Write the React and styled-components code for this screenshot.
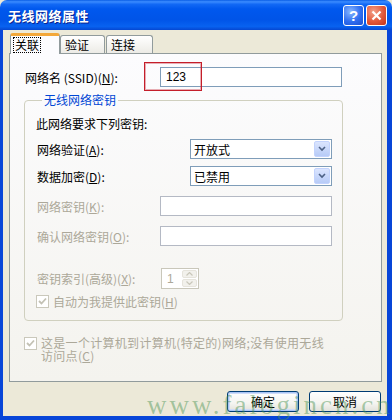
import React from "react";
import styled, { createGlobalStyle } from "styled-components";

const GlobalStyle = createGlobalStyle`
  html, body {
    margin: 0;
    padding: 0;
    background: #ece9d8;
  }
  * {
    box-sizing: border-box;
  }
`;

const Window = styled.div`
  position: relative;
  width: 392px;
  height: 420px;
  display: flex;
  flex-direction: column;
  overflow: hidden;
  font-family: "Noto Sans CJK SC", "Liberation Sans", sans-serif;
  font-size: 12px;
  color: #000;
`;

const TitleBar = styled.div`
  height: 30px;
  flex: none;
  display: flex;
  align-items: center;
  padding: 0 5px 0 8px;
  border-radius: 7px 7px 0 0;
  background: linear-gradient(
    to bottom,
    #0a5ee6 0%,
    #3b8cff 6%,
    #1269f5 14%,
    #0058ee 30%,
    #0054e8 65%,
    #0862f0 88%,
    #0547d2 100%
  );
`;

const Title = styled.div`
  flex: 1;
  color: #fff;
  font-weight: bold;
  font-size: 13px;
  letter-spacing: 0.5px;
  text-shadow: 1px 1px 0 #0b2490;
`;

const CaptionButton = styled.div`
  width: 21px;
  height: 21px;
  margin-left: 2px;
  border: 1px solid #fff;
  border-radius: 3px;
  display: flex;
  align-items: center;
  justify-content: center;
  color: #fff;
  font-family: "Liberation Sans", sans-serif;
  font-weight: bold;
  font-size: 15px;
  background: ${(p) =>
    p.$close
      ? "radial-gradient(circle at 35% 30%, #f3a08a 0%, #e2583a 55%, #c2351b 100%)"
      : "radial-gradient(circle at 35% 30%, #8ab8ff 0%, #2f6ef0 55%, #1c4fd0 100%)"};
`;

const Frame = styled.div`
  flex: 1;
  display: flex;
  flex-direction: column;
  padding: 3px 5px 0 6px;
  border-left: 3px solid #0846d8;
  border-right: 5px solid #0846d8;
  border-bottom: 4px solid #0846d8;
  background: #ece9d8;
`;

const TabRow = styled.div`
  display: flex;
  align-items: flex-end;
  height: 21px;
  margin-bottom: -1px;
  padding-left: 1px;
  position: relative;
  z-index: 1;
`;

const Tab = styled.div`
  width: ${(p) => p.$w}px;
  height: ${(p) => (p.$active ? 21 : 18)}px;
  margin-bottom: ${(p) => (p.$active ? 0 : 1)}px;
  margin-right: ${(p) => p.$gap || 0}px;
  display: flex;
  align-items: center;
  padding-left: ${(p) => (p.$active ? 3 : 4)}px;
  border: 1px solid #919b9c;
  border-bottom: none;
  border-radius: 3px 3px 0 0;
  border-top: ${(p) => (p.$active ? "3px solid #f3a83a" : "1px solid #919b9c")};
  background: ${(p) =>
    p.$active ? "#fcfcfe" : "linear-gradient(to bottom, #ffffff, #ecebe6)"};
`;

const FocusText = styled.span`
  outline: 1px dotted #000;
  padding: 0 1px;
  line-height: 14px;
`;

const Panel = styled.div`
  position: relative;
  height: 329px;
  border: 1px solid #919b9c;
  background: linear-gradient(to bottom, #fcfcfe, #f4f3ee);
  padding: 13px 0 0 14px;
`;

const Row = styled.div`
  position: relative;
  display: flex;
  align-items: center;
  height: ${(p) => p.$h || 20}px;
  margin-top: ${(p) => p.$mt || 0}px;
  padding-left: ${(p) => p.$pl || 0}px;
  color: ${(p) => (p.$disabled ? "#aca899" : "#000")};
`;

const Label = styled.div`
  width: ${(p) => p.$w}px;
  flex: none;
  white-space: nowrap;
`;

const TextBox = styled.div`
  width: ${(p) => p.$w}px;
  height: 20px;
  border: 1px solid ${(p) => (p.$disabled ? "#b4b9c4" : "#7f9db9")};
  background: #fff;
  display: flex;
  align-items: center;
  padding-left: 5px;
  font-family: "Liberation Sans", sans-serif;
  font-size: 12px;
`;

const Highlight = styled.div`
  position: absolute;
  left: 120px;
  top: -5px;
  width: 58px;
  height: 29px;
  border: 1px solid #c41e2a;
  box-shadow: inset 0 0 0 1px rgba(196, 30, 42, 0.35);
  pointer-events: none;
`;

const Group = styled.fieldset`
  width: 319px;
  margin: 6px 0 0 0;
  padding: 0 10px 12px 11px;
  border: 1px solid #d0d0bf;
  border-radius: 4px;
`;

const Legend = styled.legend`
  margin-left: 6px;
  padding: 0 2px;
  color: #0046d5;
  line-height: 14px;
`;

const Spread = styled.div`
  display: flex;
  justify-content: space-between;
  align-items: center;
  width: 100%;
`;

const SelectBox = styled.div`
  width: 142px;
  height: 20px;
  border: 1px solid #7f9db9;
  background: #fff;
  display: flex;
  align-items: center;
  justify-content: space-between;
  padding: 0 1px 0 3px;
  color: #000;
`;

const DropButton = styled.div`
  width: 16px;
  height: 16px;
  border: 1px solid #c3d3fd;
  border-radius: 2px;
  background: linear-gradient(to bottom, #dbe5fe, #b7cbf7);
  display: flex;
  align-items: center;
  justify-content: center;
`;

const Spinner = styled.div`
  width: 38px;
  height: 21px;
  border: 1px solid #c9c7ba;
  background: #fff;
  display: flex;
  align-items: center;
  justify-content: space-between;
  padding: 1px 1px 1px 5px;
  color: #aca899;
  font-family: "Liberation Sans", sans-serif;
`;

const SpinButtons = styled.div`
  width: 15px;
  height: 100%;
  display: flex;
  flex-direction: column;
  gap: 1px;
`;

const SpinHalf = styled.div`
  flex: 1;
  border: 1px solid #e6e4dc;
  border-radius: 2px;
  background: #f2f1ec;
  display: flex;
  align-items: center;
  justify-content: center;
`;

const CheckRow = styled.div`
  display: flex;
  align-items: ${(p) => (p.$top ? "flex-start" : "center")};
  gap: 4px;
  margin-top: ${(p) => p.$mt || 0}px;
  padding-left: ${(p) => p.$pl || 0}px;
  color: #aca899;
  line-height: 13px;
`;

const CheckText = styled.span`
  letter-spacing: 0.3px;
`;

const CheckBox = styled.div`
  width: 13px;
  height: 13px;
  flex: none;
  border: 1px solid #cac8bb;
  background: #fff;
  display: flex;
  align-items: center;
  justify-content: center;
  margin-top: ${(p) => p.$mt || 0}px;
`;

const ButtonBar = styled.div`
  display: flex;
  justify-content: flex-end;
  gap: 10px;
  margin-top: 9px;
  padding-right: 1px;
`;

const Button = styled.div`
  width: 72px;
  height: 21px;
  border: 1px solid #003c74;
  border-radius: 3px;
  display: flex;
  align-items: center;
  justify-content: center;
  background: linear-gradient(to bottom, #ffffff 0%, #f4f4f0 60%, #e3e2da 100%);
  box-shadow: ${(p) =>
    p.$default ? "inset 0 0 0 1px #a9c4f5, inset 0 0 0 2px #cfdcf8" : "none"};
`;

const Watermark = styled.div`
  position: absolute;
  left: 147px;
  top: 392px;
  font-family: "Liberation Serif", serif;
  font-size: 27px;
  line-height: 27px;
  letter-spacing: 3px;
  color: rgba(70, 145, 80, 0.45);
  white-space: nowrap;
  pointer-events: none;
`;

const Check = () => (
  <svg width="9" height="9" viewBox="0 0 9 9">
    <path d="M1 4 L3.5 6.5 L8 1.5" fill="none" stroke="#c3c1b4" strokeWidth="1.8" />
  </svg>
);

const Chevron = () => (
  <svg width="8" height="6" viewBox="0 0 8 6">
    <path d="M1 1 L4 4 L7 1" fill="none" stroke="#4d6185" strokeWidth="1.6" />
  </svg>
);

const Arrow = ({ up }) => (
  <svg width="7" height="4" viewBox="0 0 7 4">
    <path
      d={up ? "M0.5 3.5 L3.5 0.5 L6.5 3.5" : "M0.5 0.5 L3.5 3.5 L6.5 0.5"}
      fill="none"
      stroke="#c9c7ba"
      strokeWidth="1.2"
    />
  </svg>
);

export default function App() {
  return (
    <>
      <GlobalStyle />
      <Window>
        <TitleBar>
          <Title>无线网络属性</Title>
          <CaptionButton>?</CaptionButton>
          <CaptionButton $close>
            <svg width="11" height="11" viewBox="0 0 11 11">
              <path d="M1.5 1.5 L9.5 9.5 M9.5 1.5 L1.5 9.5" stroke="#fff" strokeWidth="2.2" />
            </svg>
          </CaptionButton>
        </TitleBar>
        <Frame>
          <TabRow>
            <Tab $w={50} $active>
              <FocusText>关联</FocusText>
            </Tab>
            <Tab $w={45} $gap={1}>验证</Tab>
            <Tab $w={47}>连接</Tab>
          </TabRow>
          <Panel>
            <Row $pl={1}>
              <Label $w={135}>
                网络名 (SSID)(<u>N</u>):
              </Label>
              <TextBox $w={182}>123</TextBox>
              <Highlight />
            </Row>

            <Group>
              <Legend>无线网络密钥</Legend>
              <Row $h={14} $mt={9}>此网络要求下列密钥:</Row>
              <Row $mt={9} $pl={1}>
                <Spread>
                  <span>网络验证(<u>A</u>):</span>
                  <SelectBox>
                    开放式
                    <DropButton>
                      <Chevron />
                    </DropButton>
                  </SelectBox>
                </Spread>
              </Row>
              <Row $mt={7} $pl={1}>
                <Spread>
                  <span>数据加密(<u>D</u>):</span>
                  <SelectBox>
                    已禁用
                    <DropButton>
                      <Chevron />
                    </DropButton>
                  </SelectBox>
                </Spread>
              </Row>
              <Row $mt={10} $pl={1} $disabled>
                <Spread>
                  <span>网络密钥(<u>K</u>):</span>
                  <TextBox $w={172} $disabled />
                </Spread>
              </Row>
              <Row $mt={10} $pl={1} $disabled>
                <Spread>
                  <span>确认网络密钥(<u>O</u>):</span>
                  <TextBox $w={172} $disabled />
                </Spread>
              </Row>
              <Row $mt={22} $h={21} $pl={1} $disabled>
                <Label $w={124}>
                  密钥索引(高级)(<u>X</u>):
                </Label>
                <Spinner>
                  1
                  <SpinButtons>
                    <SpinHalf>
                      <Arrow up />
                    </SpinHalf>
                    <SpinHalf>
                      <Arrow />
                    </SpinHalf>
                  </SpinButtons>
                </Spinner>
              </Row>
              <CheckRow $mt={6}>
                <CheckBox>
                  <Check />
                </CheckBox>
                <span>
                  自动为我提供此密钥(<u>H</u>)
                </span>
              </CheckRow>
            </Group>

            <CheckRow $top $mt={15}>
              <CheckBox $mt={1}>
                <Check />
              </CheckBox>
              <CheckText>
                这是一个计算机到计算机(特定的)网络;没有使用无线
                <br />
                访问点(<u>C</u>)
              </CheckText>
            </CheckRow>
          </Panel>
          <ButtonBar>
            <Button $default>确定</Button>
            <Button>取消</Button>
          </ButtonBar>
        </Frame>
        <Watermark>www.falogincn.cn</Watermark>
      </Window>
    </>
  );
}
